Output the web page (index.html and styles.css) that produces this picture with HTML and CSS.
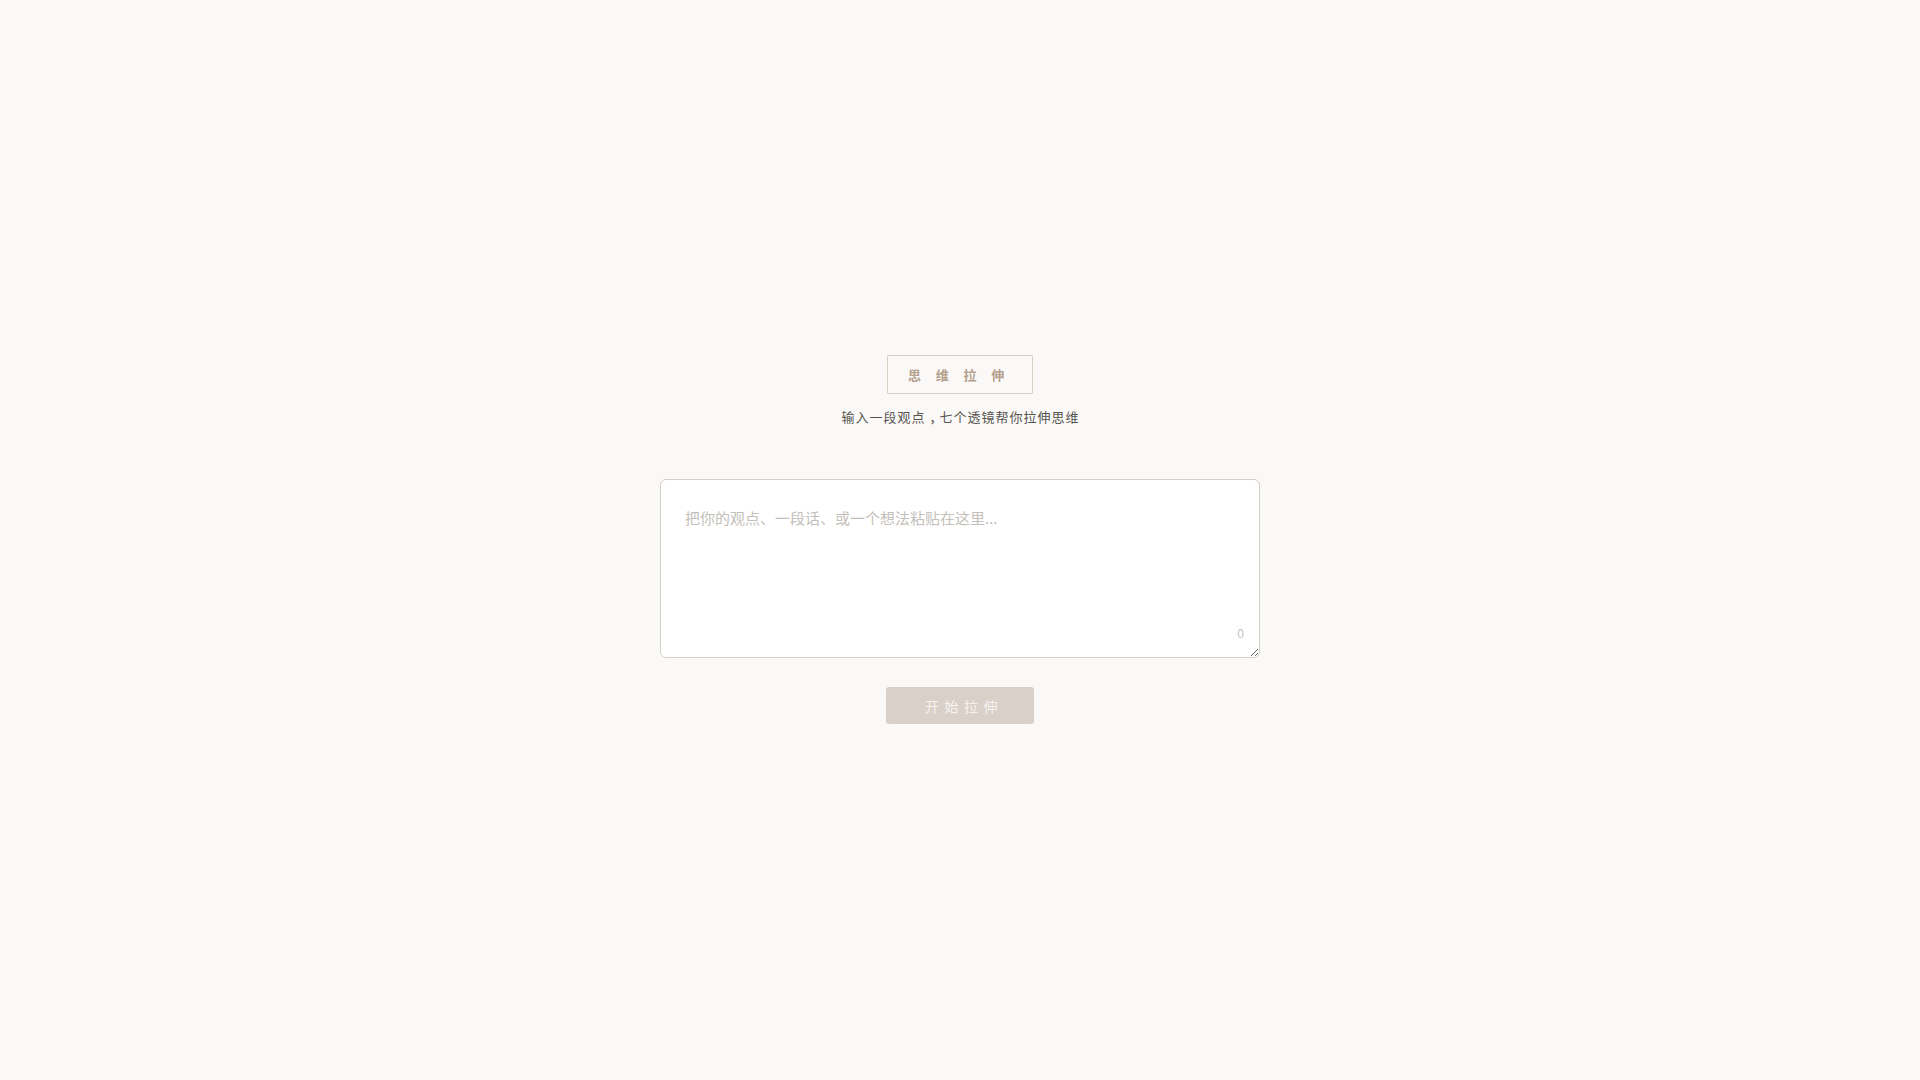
FILE: index.html
```html
<!DOCTYPE html>
<html lang="zh-CN">
<head>
<meta charset="utf-8">
<title>思维拉伸</title>
<link rel="stylesheet" href="styles.css">
</head>
<body>
<main class="page">
  <section class="panel">
    <header class="header">
      <h1 class="title">思维拉伸</h1>
      <p class="subtitle">输入一段观点<span class="comma">，</span>七个透镜帮你拉伸思维</p>
    </header>
    <div class="input-wrap">
      <textarea class="input" placeholder="把你的观点、一段话、或一个想法粘贴在这里..."></textarea>
      <span class="counter">0</span>
    </div>
    <button class="start" disabled>开始拉伸</button>
  </section>
</main>
</body>
</html>
```
FILE: styles.css
```css
* { box-sizing: border-box; }
html, body { margin: 0; padding: 0; }
body {
  background: #faf9f7;
  font-family: "Noto Sans CJK SC", "Noto Sans", sans-serif;
  color: #555;
}
.page {
  min-height: 100vh;
  display: flex;
  align-items: center;
  justify-content: center;
}
.panel {
  width: 600px;
  display: flex;
  flex-direction: column;
  align-items: center;
  margin-top: -1px;
}
.header {
  display: flex;
  flex-direction: column;
  align-items: center;
  margin-bottom: 52px;
}
.title {
  margin: 0;
  border: 1px solid #d9d0c8;
  border-radius: 1px;
  padding: 8px 13px 8px 20px;
  font-size: 13px;
  line-height: 21px;
  font-weight: 600;
  letter-spacing: 14.7px;
  color: #b4a08e;
}
.subtitle {
  margin: 13px 0 0 1px;
  font-size: 13px;
  line-height: 20px;
  letter-spacing: 1px;
  color: #57534f;
}
.comma {
  padding-left: 4px;
  letter-spacing: -3px;
}
.input-wrap {
  position: relative;
  width: 600px;
}
.input {
  display: block;
  width: 600px;
  height: 179px;
  border: 1px solid #d3cfcb;
  border-radius: 6px;
  background: #ffffff;
  padding: 24px 24px 24px 24px;
  font-family: "Noto Sans CJK SC", "Noto Sans", sans-serif;
  font-size: 15px;
  line-height: 27px;
  color: #444;
  resize: vertical;
  outline: none;
}
.input::placeholder {
  color: #c4bfba;
}
.counter {
  position: absolute;
  right: 16px;
  bottom: 17px;
  font-family: "Liberation Sans", sans-serif;
  font-size: 12px;
  line-height: 14px;
  color: #c6c0ba;
}
.start {
  margin-top: 29px;
  height: 37px;
  width: 148px;
  padding: 0 26px 0 34px;
  border: none;
  border-radius: 3px;
  background: #d9d0ca;
  color: #f6f2ee;
  font-family: "Noto Sans CJK SC", "Noto Sans", sans-serif;
  font-size: 14px;
  letter-spacing: 5.5px;
  cursor: not-allowed;
}
```
